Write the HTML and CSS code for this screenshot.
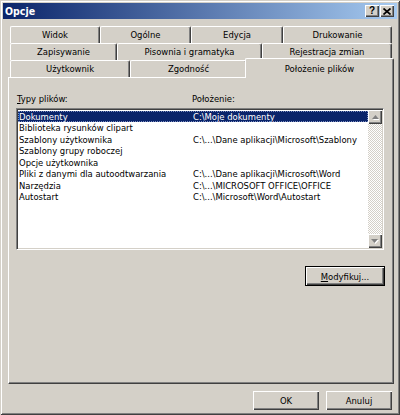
FILE: index.html
```html
<!DOCTYPE html>
<html lang="pl">
<head>
<meta charset="utf-8">
<title>Opcje</title>
<link rel="stylesheet" href="styles.css">
</head>
<body>
<div class="window">
  <div class="titlebar">
    <span class="title">Opcje</span>
    <div class="tbtns">
      <span class="tbtn help">?</span>
      <span class="tbtn close"><svg width="8" height="7" viewBox="0 0 8 7"><path d="M0.5 0.5L7.5 6.5M7.5 0.5L0.5 6.5" stroke="#000" stroke-width="1.7"/></svg></span>
    </div>
  </div>
  <div class="client">
    <div class="tabs">
      <div class="tabrow r1">
        <div class="tab">Widok</div>
        <div class="tab">Ogólne</div>
        <div class="tab">Edycja</div>
        <div class="tab">Drukowanie</div>
      </div>
      <div class="tabrow r2">
        <div class="tab">Zapisywanie</div>
        <div class="tab">Pisownia i gramatyka</div>
        <div class="tab">Rejestracja zmian</div>
      </div>
      <div class="tabrow r3">
        <div class="tab">Użytkownik</div>
        <div class="tab">Zgodność</div>
        <div class="tab sel">Położenie plików</div>
      </div>
    </div>
    <div class="panel">
      <div class="labels">
        <span class="c1"><u>T</u>ypy plików:</span>
        <span class="c2">Położenie:</span>
      </div>
      <div class="list">
        <div class="rows">
          <div class="row sel"><span class="c1">Dokumenty</span><span class="c2">C:\Moje dokumenty</span></div>
          <div class="row"><span class="c1">Biblioteka rysunków clipart</span><span class="c2"></span></div>
          <div class="row"><span class="c1">Szablony użytkownika</span><span class="c2">C:\...\Dane aplikacji\Microsoft\Szablony</span></div>
          <div class="row"><span class="c1">Szablony grupy roboczej</span><span class="c2"></span></div>
          <div class="row"><span class="c1">Opcje użytkownika</span><span class="c2"></span></div>
          <div class="row"><span class="c1">Pliki z danymi dla autoodtwarzania</span><span class="c2">C:\...\Dane aplikacji\Microsoft\Word</span></div>
          <div class="row"><span class="c1">Narzędzia</span><span class="c2">C:\...\MICROSOFT OFFICE\OFFICE</span></div>
          <div class="row"><span class="c1">Autostart</span><span class="c2">C:\...\Microsoft\Word\Autostart</span></div>
        </div>
        <div class="vscroll">
          <div class="sbtn"><svg width="7" height="5" viewBox="0 0 7 5"><path d="M4.5 1L8 5H1z" fill="#fff"/><path d="M3.5 0L7 4H0z" fill="#808080"/></svg></div>
          <div class="track"></div>
          <div class="sbtn"><svg width="8" height="5" viewBox="0 0 8 5"><path d="M1 1H8L4.5 5z" fill="#fff"/><path d="M0 0H7L3.5 4z" fill="#808080"/></svg></div>
        </div>
      </div>
      <div class="modrow">
        <button class="btn def mod"><u>M</u>odyfikuj...</button>
      </div>
    </div>
    <div class="footer">
      <button class="btn foot">OK</button>
      <button class="btn foot">Anuluj</button>
    </div>
  </div>
</div>
</body>
</html>
```

FILE: styles.css
```css
html, body {
  margin: 0;
  padding: 0;
  background: #d4d0c8;
}

.window {
  width: 400px;
  height: 415px;
  box-sizing: border-box;
  padding: 3px;
  background: #d4d0c8;
  box-shadow: inset 1px 1px #d4d0c8, inset -1px -1px #404040, inset 2px 2px #ffffff, inset -2px -2px #808080;
  display: flex;
  flex-direction: column;
  font-family: "DejaVu Sans Condensed", "DejaVu Sans", sans-serif;
  font-stretch: condensed;
  font-size: 9.4px;
  color: #000;
}

.titlebar {
  height: 16px;
  flex: none;
  display: flex;
  align-items: center;
  justify-content: space-between;
  padding: 0 3px 0 2px;
  background: linear-gradient(to right, #0a246a, #a6caf0);
}

.title {
  color: #fff;
  font-weight: bold;
  font-size: 10.5px;
}

.tbtns {
  display: flex;
  gap: 1px;
}

.tbtn {
  width: 14px;
  height: 12px;
  box-sizing: border-box;
  background: #d4d0c8;
  box-shadow: inset 1px 1px #ffffff, inset -1px -1px #404040, inset -2px -2px #808080;
  display: flex;
  align-items: center;
  justify-content: center;
}

.help {
  font-weight: bold;
  font-size: 10px;
  line-height: 12px;
  font-family: "Liberation Sans", sans-serif;
}

.client {
  flex: 1;
  display: flex;
  flex-direction: column;
  padding: 7px 3px 0 5px;
}

.tabs {
  margin: 0 2px;
}

.tabrow {
  display: grid;
  grid-template-rows: 17px;
}

.r1 { grid-template-columns: 90px 91px 92px 109px; }
.r2 { grid-template-columns: 107px 145px 130px; }
.r3 { grid-template-columns: 120px 117px 145px; }

.tab {
  box-sizing: border-box;
  border-top: 1px solid #ffffff;
  border-left: 1px solid #ffffff;
  border-right: 1px solid #404040;
  box-shadow: inset -1px 0 #808080;
  border-radius: 2px 2px 0 0;
  text-align: center;
  line-height: 16px;
  white-space: nowrap;
  background: #d4d0c8;
}

.tab.sel {
  margin: -2px -2px -1px -2px;
  padding-top: 2px;
  position: relative;
  z-index: 1;
}

.panel {
  height: 307px;
  flex: none;
  box-sizing: border-box;
  border-top: 1px solid #ffffff;
  border-left: 1px solid #ffffff;
  border-right: 1px solid #404040;
  border-bottom: 1px solid #404040;
  box-shadow: inset -1px -1px #808080;
  padding: 15px 0 0 7px;
}

.labels {
  display: flex;
  height: 15px;
  line-height: 12px;
  padding-left: 1px;
}

.labels .c1 {
  width: 175px;
}

.list {
  width: 368px;
  height: 142px;
  box-sizing: border-box;
  border: 1px solid;
  border-color: #808080 #ffffff #ffffff #808080;
  box-shadow: inset 1px 1px #404040, inset -1px -1px #d4d0c8;
  background: #fff;
  display: flex;
  padding: 1px;
}

.rows {
  flex: 1;
  padding-top: 1px;
}

.row {
  display: flex;
  height: 11.43px;
  line-height: 11.43px;
  padding-left: 1px;
  white-space: nowrap;
}

.row .c1 {
  width: 174px;
  flex: none;
}

.row.sel {
  background: #0a246a;
  color: #fff;
  outline: 1px dotted #7f90c0;
  outline-offset: -1px;
}

.vscroll {
  width: 14px;
  display: flex;
  flex-direction: column;
  background: repeating-conic-gradient(#ffffff 0 25%, #d4d0c8 0 50%) 0 0 / 2px 2px;
}

.track {
  flex: 1;
}

.sbtn {
  height: 14px;
  box-sizing: border-box;
  background: #d4d0c8;
  box-shadow: inset 1px 1px #ffffff, inset -1px -1px #404040, inset -2px -2px #808080;
  display: flex;
  align-items: center;
  justify-content: center;
}

.modrow {
  display: flex;
  justify-content: flex-end;
  margin-top: 16px;
  padding-right: 8px;
}

.btn {
  font: inherit;
  color: #000;
  margin: 0;
  padding: 0;
  background: #d4d0c8;
  border: none;
  box-shadow: inset 1px 1px #ffffff, inset -1px -1px #404040, inset -2px -2px #808080;
  text-align: center;
}

.btn.def {
  border: 1px solid #000;
}

.mod {
  width: 80px;
  height: 20px;
}

.footer {
  display: flex;
  justify-content: flex-end;
  gap: 7px;
  margin-top: 7px;
  padding-right: 2px;
}

.foot {
  width: 66px;
  height: 19px;
}
```
